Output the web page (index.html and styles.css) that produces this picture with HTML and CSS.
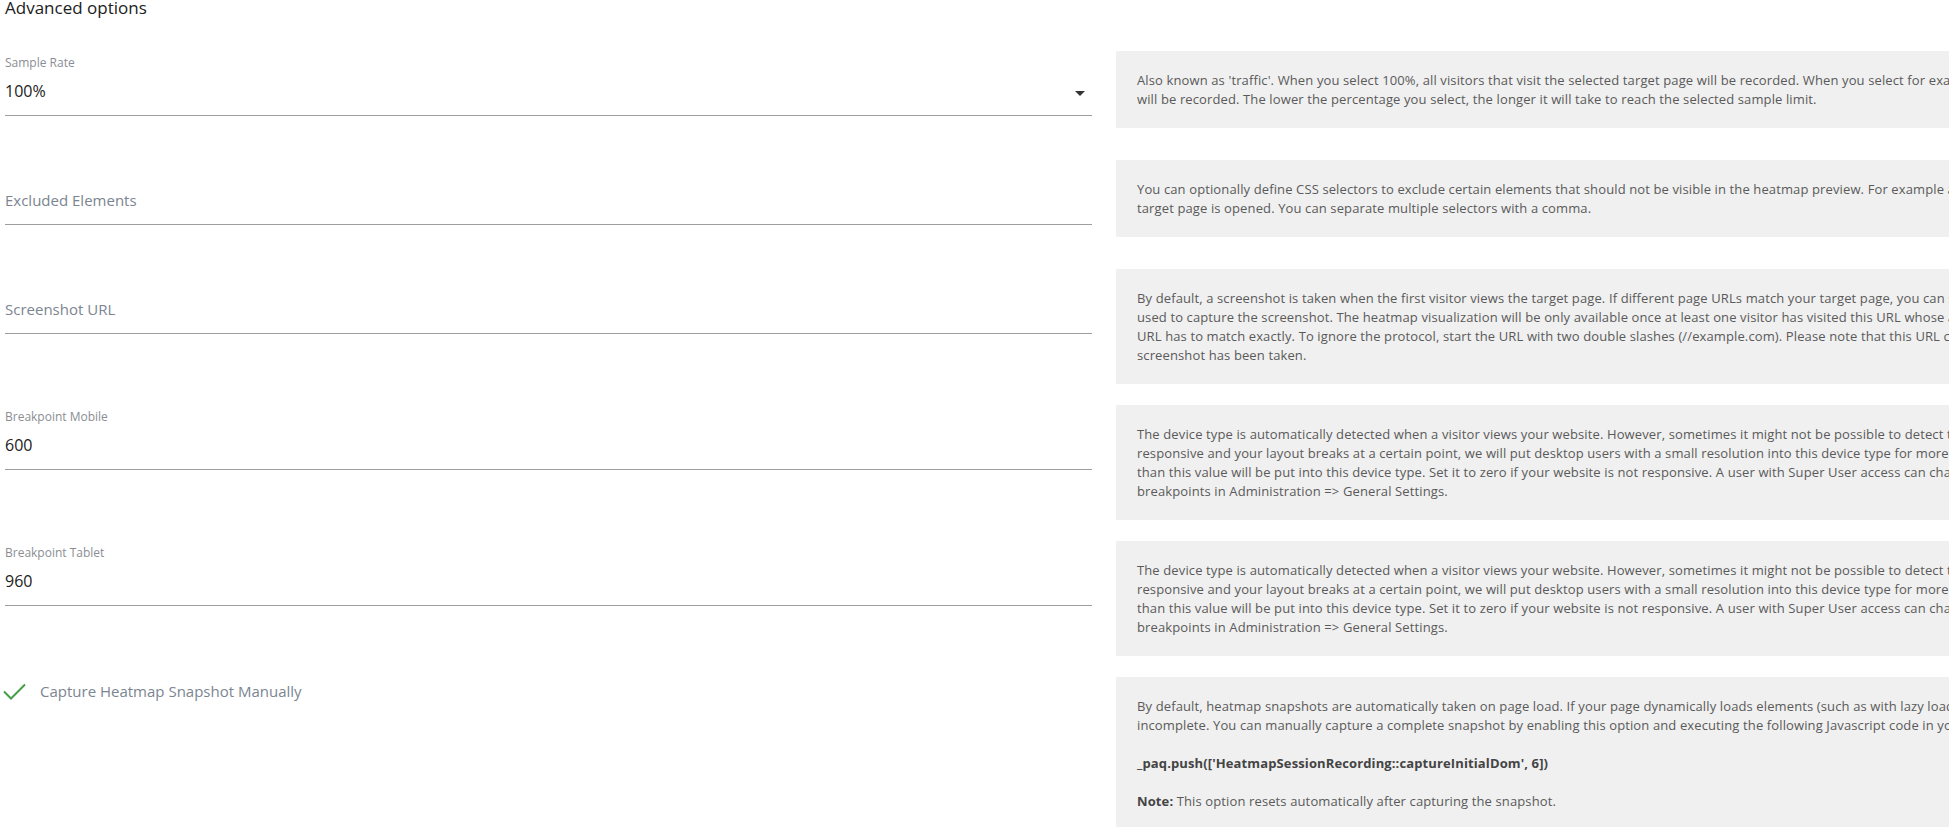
FILE: index.html
```
<!DOCTYPE html>
<html lang="en">
<head>
    <meta charset="UTF-8">
    <meta name="viewport" content="width=device-width, initial-scale=1.0">
    <title>Advanced options</title>
    <link rel="stylesheet" href="styles.css">
</head>
<body>
    <div class="page">
        <h2 class="page-title">Advanced options</h2>

        <div class="form-row">
            <div class="field">
                <label class="field-label">Sample Rate</label>
                <div class="field-value">
                    <span>100%</span>
                    <span class="caret"></span>
                </div>
            </div>
            <div class="form-help">
                <p>Also known as 'traffic'. When you select 100%, all visitors that visit the selected target page will be recorded. When you select for example 50%, only every second visitor will be recorded. The lower the percentage you select, the longer it will take to reach the selected sample limit.</p>
            </div>
        </div>

        <div class="form-row">
            <div class="field">
                <label class="field-label"></label>
                <div class="field-value placeholder">Excluded Elements</div>
            </div>
            <div class="form-help">
                <p>You can optionally define CSS selectors to exclude certain elements that should not be visible in the heatmap preview. For example a popup which is shown after the target page is opened. You can separate multiple selectors with a comma.</p>
            </div>
        </div>

        <div class="form-row">
            <div class="field">
                <label class="field-label"></label>
                <div class="field-value placeholder">Screenshot URL</div>
            </div>
            <div class="form-help">
                <p>By default, a screenshot is taken when the first visitor views the target page. If different page URLs match your target page, you can specify a different URL that should be used to capture the screenshot. The heatmap visualization will be only available once at least one visitor has visited this URL whose actions were all tracked as well. The URL has to match exactly. To ignore the protocol, start the URL with two double slashes (//example.com). Please note that this URL cannot be changed anymore once the screenshot has been taken.</p>
            </div>
        </div>

        <div class="form-row">
            <div class="field">
                <label class="field-label">Breakpoint Mobile</label>
                <div class="field-value">600</div>
            </div>
            <div class="form-help">
                <p>The device type is automatically detected when a visitor views your website. However, sometimes it might not be possible to detect the device type right. If your site is responsive and your layout breaks at a certain point, we will put desktop users with a small resolution into this device type for more accurate results. Any widths lower than this value will be put into this device type. Set it to zero if your website is not responsive. A user with Super User access can change the default value for these breakpoints in Administration =&gt; General Settings.</p>
            </div>
        </div>

        <div class="form-row">
            <div class="field">
                <label class="field-label">Breakpoint Tablet</label>
                <div class="field-value">960</div>
            </div>
            <div class="form-help">
                <p>The device type is automatically detected when a visitor views your website. However, sometimes it might not be possible to detect the device type right. If your site is responsive and your layout breaks at a certain point, we will put desktop users with a small resolution into this device type for more accurate results. Any widths lower than this value will be put into this device type. Set it to zero if your website is not responsive. A user with Super User access can change the default value for these breakpoints in Administration =&gt; General Settings.</p>
            </div>
        </div>

        <div class="form-row">
            <div class="field">
                <label class="checkbox">
                    <svg class="check" width="23" height="17" viewBox="0 0 23 17">
                        <polyline points="1,8.5 8,15.5 22,1.5" fill="none" stroke="#43a047" stroke-width="2"/>
                    </svg>
                    <span>Capture Heatmap Snapshot Manually</span>
                </label>
            </div>
            <div class="form-help">
                <p>By default, heatmap snapshots are automatically taken on page load. If your page dynamically loads elements (such as with lazy loading), the captured snapshot might be incomplete. You can manually capture a complete snapshot by enabling this option and executing the following Javascript code in your website:</p>
                <p><strong>_paq.push(['HeatmapSessionRecording::captureInitialDom', 6])</strong></p>
                <p><strong>Note:</strong> This option resets automatically after capturing the snapshot.</p>
            </div>
        </div>
    </div>
</body>
</html>
```

FILE: styles.css
```
html, body {
    margin: 0;
    padding: 0;
    overflow: hidden;
}
body {
    font-family: "Open Sans", "Noto Sans", sans-serif;
    background-color: #fff;
    color: #212121;
}
.page {
    padding-left: 5px;
}
.page-title {
    font-size: 17px;
    font-weight: 400;
    line-height: 24px;
    margin: -4px 0 31px;
    color: #212121;
}
.form-row {
    display: grid;
    grid-template-columns: 1087px 1087px;
    column-gap: 24px;
    align-items: start;
    margin-bottom: 21px;
}
.field {
    height: 88px;
}
.field-label {
    display: block;
    height: 23px;
    font-size: 12px;
    line-height: 24px;
    color: #8a8e94;
}
.field-value {
    display: flex;
    justify-content: space-between;
    align-items: center;
    font-size: 16px;
    line-height: 35px;
    padding-bottom: 6px;
    border-bottom: 1px solid #9e9e9e;
    color: #212121;
}
.field-value.placeholder {
    font-size: 15px;
    color: #7b8591;
}
.caret {
    width: 0;
    height: 0;
    border-left: 5px solid transparent;
    border-right: 5px solid transparent;
    border-top: 5px solid #333;
    margin: 3px 7px 0 0;
}
.checkbox {
    display: flex;
    align-items: center;
    margin-top: 3px;
    font-size: 15px;
    line-height: 22px;
    color: #7b8591;
}
.check {
    margin-left: -2px;
    margin-right: 14px;
}
.form-help {
    background-color: #f0f0f0;
    padding: 20px 21px 19px;
    font-size: 13px;
    line-height: 19px;
    letter-spacing: 0.12px;
    color: #5a5a5a;
}
.form-help p {
    margin: 0 0 19px;
}
.form-help p:last-child {
    margin-bottom: 0;
}
.form-help strong {
    color: #444;
}
```
